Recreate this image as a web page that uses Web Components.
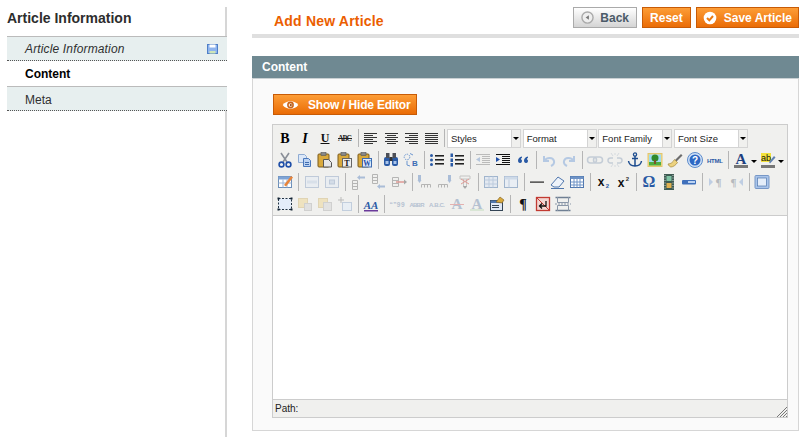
<!DOCTYPE html>
<html>
<head>
<meta charset="utf-8">
<title>Add New Article</title>
<style>
  html,body{margin:0;padding:0;background:#fff;}
  body{font-family:"Liberation Sans",Arial,sans-serif;font-size:12px;color:#2f2f2f;overflow:hidden;}
</style>
</head>
<body>
<admin-page>
  <admin-sidebar slot="side" heading="Article Information">
    <side-tab kind="changed" saved>Article Information</side-tab>
    <side-tab kind="active">Content</side-tab>
    <side-tab>Meta</side-tab>
  </admin-sidebar>
  <page-head heading="Add New Article">
    <admin-button kind="back" icon="back">Back</admin-button>
    <admin-button>Reset</admin-button>
    <admin-button icon="check">Save Article</admin-button>
  </page-head>
  <content-panel heading="Content">
    <admin-button icon="eye" wide>Show / Hide Editor</admin-button>
    <rich-editor></rich-editor>
  </content-panel>
</admin-page>

<script>
// icon set for the editor toolbar, all drawn on a 20x20 box
const serif = 'font-family="Liberation Serif,serif"';
const sans = 'font-family="Liberation Sans,sans-serif"';
const lines = (rows, c) => rows.map(r => `<rect x="${r[0]}" y="${r[1]}" width="${r[2]}" height="1" fill="${c || '#333'}"/>`).join('');
const clip = inner => `<rect x="3" y="4" width="11" height="13" rx="1" fill="#d9a93c" stroke="#7a5a1c"/><rect x="6" y="2.5" width="5" height="3" fill="#888" stroke="#555" stroke-width=".6"/>${inner}`;
const tableGrid = (fill, extra) => `<rect x="3.5" y="4.5" width="13" height="11" fill="${fill || '#dfe8f5'}" stroke="#6d8fb8"/>${extra || ''}`;
const listLines = `${lines([[8,5,9],[8,9,9],[8,13,9]],'#222')}${lines([[8,6,9],[8,10,9],[8,14,9]],'#777')}`;
const ICONS = {
  bold: `<text x="10" y="15" ${serif} font-size="14" font-weight="bold" text-anchor="middle" fill="#000">B</text>`,
  italic: `<text x="10" y="15" ${serif} font-size="14" font-weight="bold" font-style="italic" text-anchor="middle" fill="#000">I</text>`,
  underline: `<text x="10" y="13.5" ${serif} font-size="12" font-weight="bold" text-anchor="middle" fill="#111">U</text><rect x="5.5" y="15" width="9" height="1" fill="#111"/>`,
  strike: `<text x="10" y="13" ${serif} font-size="7.5" font-weight="bold" text-anchor="middle" fill="#222" textLength="14">ABC</text><rect x="3" y="10" width="14" height="1" fill="#222"/>`,
  left: lines([[3,5,13],[3,7,9],[3,9,13],[3,11,9],[3,13,13],[3,15,9]]),
  center: lines([[4,5,13],[6,7,9],[4,9,13],[6,11,9],[4,13,13],[6,15,9]]),
  right: lines([[4,5,13],[8,7,9],[4,9,13],[8,11,9],[4,13,13],[8,15,9]]),
  justify: lines([[4,5,13],[4,7,13],[4,9,13],[4,11,13],[4,13,13],[4,15,13]]),
  cut: `<path d="M6 3l6 9M14 3l-6 9" stroke="#8a8f98" stroke-width="1.6" fill="none"/><circle cx="6.5" cy="14.5" r="2.4" fill="none" stroke="#1f4fa8" stroke-width="1.6"/><circle cx="13.5" cy="14.5" r="2.4" fill="none" stroke="#1f4fa8" stroke-width="1.6"/>`,
  copy: `<path d="M3.5 4.5h6l2 2v6h-8z" fill="#dce8f8" stroke="#8fabd2"/><path d="M8.5 8.5h5l2 2v6h-7z" fill="#bcd3f2" stroke="#4a78bc"/>${lines([[10,12,4],[10,14,4]],'#3f6cb0')}`,
  paste: clip(`<path d="M8.5 9.5h5l3 3v4.500h-8z" fill="#e6e6e6" stroke="#555"/>`),
  pastetext: clip(`<rect x="7.500" y="8.500" width="9" height="8.500" fill="#eee" stroke="#666"/><text x="12" y="16" ${serif} font-size="8" font-weight="bold" text-anchor="middle" fill="#111">T</text>`),
  pasteword: clip(`<rect x="7.500" y="8.500" width="9" height="8.500" fill="#dfe8f8" stroke="#3f6cb0"/><text x="12" y="16" ${serif} font-size="7.500" font-weight="bold" text-anchor="middle" fill="#1f4fa8">W</text>`),
  find: `<rect x="3" y="7" width="6" height="9" rx="2" fill="#2a5aa5"/><rect x="11" y="7" width="6" height="9" rx="2" fill="#2a5aa5"/><rect x="5" y="3" width="3.500" height="5" fill="#4c4f57"/><rect x="11.500" y="3" width="3.500" height="5" fill="#4c4f57"/><rect x="8.500" y="7" width="3" height="4" fill="#333"/><rect x="4.500" y="11" width="3" height="3" fill="#a9c4ea"/><rect x="12.500" y="11" width="3" height="3" fill="#a9c4ea"/>`,
  replace: `<circle cx="6" cy="7" r="2.800" fill="none" stroke="#6c96cf" stroke-dasharray="1.500 1"/><path d="M9 3.500l3 1.500M6 11l0 4 3 1" fill="none" stroke="#6c96cf"/><text x="14" y="16" ${sans} font-size="8" font-weight="bold" text-anchor="middle" fill="#3c6cb4">B</text>`,
  bullist: `${listLines}<circle cx="4.500" cy="5.500" r="1.500" fill="#2a5aa5"/><circle cx="4.500" cy="10" r="1.500" fill="#2a5aa5"/><circle cx="4.500" cy="14.500" r="1.500" fill="#2a5aa5"/>`,
  numlist: `${listLines}<rect x="3.500" y="3.500" width="2.500" height="3.500" fill="#2a5aa5"/><rect x="3.500" y="8.500" width="2.500" height="3.500" fill="#2a5aa5"/><rect x="3.500" y="13" width="2.500" height="3.500" fill="#2a5aa5"/>`,
  outdent: `${lines([[3,4,14],[9,6,8],[9,8,8],[9,10,8],[9,12,8],[3,14,14]],'#999')}<path d="M7 7v5L3 9.500z" fill="#8fabd2"/>`,
  indent: `${lines([[3,4,14],[9,6,8],[9,8,8],[9,10,8],[9,12,8],[3,14,14]],'#111')}<path d="M3 7v5l4-2.500z" fill="#1f4fa8"/>`,
  quote: `<path d="M9 6.500C6.500 7 5 8.500 5 11a2 2 0 1 0 3-1.700c0-.8.5-1.300 1-1.500zM15 6.500c-2.500.5-4 2-4 4.500a2 2 0 1 0 3-1.700c0-.8.5-1.300 1-1.500z" fill="#2a5aa5"/>`,
  undo: `<path d="M5 6v5h5M5.500 10.500C8 7 14 7 15 11c.6 2.500-1 4-3 5" fill="none" stroke="#8fb0dc" stroke-width="2"/>`,
  redo: `<path d="M15 6v5h-5M14.500 10.500C12 7 6 7 5 11c-.6 2.500 1 4 3 5" fill="none" stroke="#8fb0dc" stroke-width="2"/>`,
  link: `<rect x="2.500" y="7" width="9" height="6" rx="3" fill="none" stroke="#a8b6c8" stroke-width="1.500"/><rect x="8.500" y="7" width="9" height="6" rx="3" fill="none" stroke="#a8b6c8" stroke-width="1.500"/>`,
  unlink: `<path d="M8 8H5.500a2.500 2.500 0 0 0 0 5H8M12 8h2.500a2.500 2.500 0 0 1 0 5H12" fill="none" stroke="#a8b6c8" stroke-width="1.500"/><path d="M6 3l2 3M14 3l-2 3M6 17l2-3M14 17l-2-3M10 3v2M10 15v2" stroke="#c3ccd6"/>`,
  anchor: `<circle cx="10" cy="4.500" r="1.600" fill="none" stroke="#1d4c8f" stroke-width="1.300"/><path d="M10 6v10M7 8.500h6M3.500 11c.5 3.500 3.500 5 6.500 5s6-1.500 6.500-5" fill="none" stroke="#1d4c8f" stroke-width="1.500"/>`,
  image: `<rect x="3" y="3.500" width="14" height="13" fill="#f4d884" stroke="#e2c66e"/><rect x="4" y="4.500" width="12" height="8" fill="#9fdcef"/><rect x="4" y="12" width="12" height="3.500" fill="#4cae3f"/><circle cx="10" cy="8" r="3.500" fill="#2f8a2b"/><rect x="9" y="10" width="2" height="4" fill="#7a5528"/>`,
  cleanup: `<path d="M10 10l6-6 1.500 1.500-6 6z" fill="#6d6d6d"/><path d="M3 14c3 0 5-2 6.500-4.500l3 3C11 15 8 17 6 17c-1 0-2.500-1.500-3-3z" fill="#ecd27f" stroke="#a3873a" stroke-width=".7"/>`,
  help: `<circle cx="10" cy="10" r="7.500" fill="#cfe0f6" stroke="#5d8ccc"/><circle cx="10" cy="10" r="5.500" fill="#2d68c4"/><text x="10" y="13.500" ${sans} font-size="10" font-weight="bold" text-anchor="middle" fill="#fff">?</text>`,
  html: `<text x="10" y="12.500" ${sans} font-size="6" font-weight="bold" text-anchor="middle" fill="#2a5aa5" textLength="16">HTML</text>`,
  forecolor: `<text x="10" y="14" ${serif} font-size="15" font-weight="bold" text-anchor="middle" fill="#1d3f80">A</text><rect x="3" y="15" width="14" height="3" fill="#777"/>`,
  backcolor: `<rect x="3" y="3" width="10" height="9" fill="#f3e23a"/><text x="8" y="10.500" ${sans} font-size="9" text-anchor="middle" fill="#111">ab</text><path d="M11 12l5-6 1.500 1.500-5.500 6z" fill="#5f7fb0"/><rect x="3" y="15" width="14" height="3" fill="#777"/>`,
  tableprops: `${tableGrid('#fff', '<rect x="3.500" y="4.500" width="13" height="3" fill="#7fa4d6"/><path d="M3.500 11h13M8 7.500v8M12 7.500v8" stroke="#9bb3d3"/>')}<path d="M9 13l7-9 2 1.500-7 9z" fill="#e8843a"/>`,
  rowprops: `<rect x="3.500" y="4.500" width="13" height="11" fill="#e6ecf4" stroke="#9fb2cc"/><rect x="5" y="8.500" width="10" height="3" fill="#c9d6e6"/>`,
  cellprops: `<rect x="3.500" y="4.500" width="13" height="11" fill="#e6ecf4" stroke="#9fb2cc"/><rect x="7.500" y="8" width="5" height="4" fill="#c0d0e4" stroke="#9fb2cc"/>`,
  rowbefore: `<path d="M3.500 8.500h5v9h-5zM3.500 11.500h5M3.500 14.500h5" fill="none" stroke="#8f8f8f"/><path d="M10 5.500h6" stroke="#7d9cc9" stroke-width="2"/><path d="M11 3v5L8 5.500z" fill="#7d9cc9"/>`,
  rowafter: `<path d="M3.500 2.500h5v9h-5zM3.500 5.500h5M3.500 8.500h5" fill="none" stroke="#8f8f8f"/><path d="M10 14.500h6" stroke="#7d9cc9" stroke-width="2"/><path d="M11 12v5l-3-2.500z" fill="#7d9cc9"/>`,
  rowdelete: `<path d="M3.500 5.500h6v9h-6zM3.500 8.500h6M3.500 11.500h6" fill="none" stroke="#8f8f8f"/><path d="M7 10h8" stroke="#d4625a" stroke-width="1.500"/><path d="M15 7.500v5l3-2.500z" fill="#777"/>`,
  colbefore: `<path d="M6.500 15.500v-3h9v3M9.500 12.500v3M12.500 12.500v3" fill="none" stroke="#8f8f8f"/><rect x="3" y="3" width="3" height="5" fill="#7d9cc9"/><path d="M2.500 8h4L4.500 11z" fill="#7d9cc9"/>`,
  colafter: `<path d="M3.500 15.500v-3h9v3M6.500 12.500v3M9.500 12.500v3" fill="none" stroke="#8f8f8f"/><rect x="13" y="3" width="3" height="5" fill="#7d9cc9"/><path d="M12.500 8h4l-2 3z" fill="#7d9cc9"/>`,
  coldelete: `<path d="M5 4h10v3h-10zM8.500 7v8h3v-8" fill="none" stroke="#a9a9a9"/><path d="M6 7l8 5M14 7l-8 5" stroke="#d4625a"/><path d="M8 14h4l-2 3z" fill="#777"/>`,
  splitcells: tableGrid('#dbe6f4', '<path d="M3.500 8h13M3.500 12h13M8 4.500v11M12 4.500v11" stroke="#9bb3d3"/>'),
  mergecells: tableGrid('#e6eef8', '<rect x="3.500" y="4.500" width="13" height="3" fill="#b9cce5"/><path d="M8 7.500v8" stroke="#9bb3d3"/>'),
  hr: `<rect x="3" y="9.500" width="14" height="1.200" fill="#222"/>`,
  removeformat: `<path d="M4 13l7-8 6 4-5 6H7z" fill="#eef3fa" stroke="#4f76ad"/><path d="M4 16.500h13" stroke="#4f76ad"/>`,
  table: `<rect x="3.500" y="4.500" width="13" height="11" fill="#fff" stroke="#4f76ad"/><rect x="3.500" y="4.500" width="13" height="2.500" fill="#6f93c6"/><path d="M3.500 10h13M3.500 13h13M7 7v8.500M10 7v8.500M13 7v8.500" stroke="#6f93c6"/>`,
  sub: `<text x="8" y="14" ${sans} font-size="12" font-weight="bold" text-anchor="middle" fill="#111">x</text><text x="14.500" y="16" ${sans} font-size="6" font-weight="bold" text-anchor="middle" fill="#2a5aa5">2</text>`,
  sup: `<text x="8" y="15" ${sans} font-size="12" font-weight="bold" text-anchor="middle" fill="#111">x</text><text x="14.500" y="9" ${sans} font-size="6" font-weight="bold" text-anchor="middle" fill="#333">2</text>`,
  charmap: `<text x="10" y="15" ${serif} font-size="16" font-weight="bold" text-anchor="middle" fill="#2a5aa5">Ω</text>`,
  media: `<rect x="5" y="2" width="10" height="16" fill="#3e5a52"/><rect x="7.500" y="4" width="5" height="5" fill="#7fc3a4"/><rect x="7.500" y="11" width="5" height="5" fill="#e0b050"/><path d="M6 3v14M14 3v14" stroke="#cfd7d2" stroke-dasharray="1 1.500"/>`,
  advhr: `<rect x="3" y="8" width="14" height="4.500" rx="1" fill="#3f70bb"/><rect x="9" y="9" width="7" height="2" fill="#bcd3f2"/>`,
  ltr: `<path d="M3 6v8l4-4z" fill="#9fb8dc"/><text x="12.500" y="14" ${serif} font-size="11" font-weight="bold" text-anchor="middle" fill="#8f969e">¶</text>`,
  rtl: `<text x="7.500" y="14" ${serif} font-size="11" font-weight="bold" text-anchor="middle" fill="#8f969e">¶</text><path d="M17 6v8l-4-4z" fill="#9fb8dc"/>`,
  fullscreen: `<rect x="3" y="3.500" width="14" height="13" rx="1" fill="#a9c4ea" stroke="#7797c6"/><rect x="5.500" y="6" width="9" height="8" fill="#e4edf9" stroke="#4f76ad" stroke-width=".7"/>`,
  layer: `<rect x="3.500" y="4.500" width="13" height="11" fill="#e4edf9" stroke="#234" stroke-dasharray="2 1.500"/><rect x="2.500" y="3.500" width="2" height="2" fill="#123"/><rect x="15.500" y="3.500" width="2" height="2" fill="#123"/><rect x="2.500" y="14.500" width="2" height="2" fill="#123"/><rect x="15.500" y="14.500" width="2" height="2" fill="#123"/>`,
  forward: `<rect x="3.500" y="4.500" width="9" height="9" fill="#eed9a0" stroke="#d6c38e"/><rect x="9.500" y="9.500" width="7" height="7" fill="#d7d7d7" stroke="#bbb"/>`,
  backward: `<rect x="3.500" y="4.500" width="9" height="9" fill="#eed9a0" stroke="#d6c38e"/><rect x="8.500" y="8.500" width="8" height="8" fill="#dadada" stroke="#bbb"/>`,
  absolute: `<rect x="7.500" y="8.500" width="9" height="8" fill="#e4edf9" stroke="#a5b8d2"/><path d="M6 3v6M3 6h6" stroke="#999"/>`,
  styleprops: `<text x="10" y="15" ${serif} font-size="11" font-weight="bold" font-style="italic" text-anchor="middle" fill="#2a5aa5">AA</text><rect x="3" y="16" width="14" height="1.500" fill="#6a3a9a"/>`,
  cite: `<text x="10" y="12.500" ${sans} font-size="6.500" font-weight="bold" text-anchor="middle" fill="#8fa3bf" textLength="15">“”99</text>`,
  abbr: `<text x="10" y="12.500" ${sans} font-size="6" font-weight="bold" text-anchor="middle" fill="#8fa3bf" textLength="15">ABBR</text>`,
  acronym: `<text x="10" y="12.500" ${sans} font-size="6" font-weight="bold" text-anchor="middle" fill="#8fa3bf" textLength="16">A.B.C.</text>`,
  del: `<text x="10" y="15" ${serif} font-size="15" font-weight="bold" text-anchor="middle" fill="#8fa3bf">A</text><rect x="3" y="10" width="14" height="1" fill="#d88"/>`,
  ins: `<text x="10" y="15" ${serif} font-size="15" font-weight="bold" text-anchor="middle" fill="#8fa3bf">A</text><rect x="3" y="15.500" width="14" height="1" fill="#a4cf9d"/>`,
  attribs: `<rect x="3.500" y="6.500" width="12" height="10" fill="#dfe8f5" stroke="#345"/><rect x="3.500" y="6.500" width="12" height="2.500" fill="#4f76ad"/><path d="M9 8l4-5 4 3-2 3z" fill="#d9a93c" stroke="#7a5a1c" stroke-width=".6"/>${lines([[5,11,7],[5,13,7]],'#345')}`,
  visualchars: `<text x="10" y="15" ${serif} font-size="14" font-weight="bold" text-anchor="middle" fill="#111">¶</text>`,
  nonbreaking: `<rect x="3.500" y="3.500" width="13" height="13" fill="#f3d6d2" stroke="#c23a32" stroke-width="1.300"/><path d="M4 4l12 12" stroke="#c23a32"/><path d="M13 7v5H7M9 9.500L6.500 12 9 14.500" fill="none" stroke="#111" stroke-width="1.300"/>`,
  pagebreak: `<path d="M2.500 3.500h15M2.500 16.500h15" stroke="#6f7f93" stroke-width="1.500"/><path d="M4.500 3v5.500h11V3M4.500 17v-5.500h11V17" fill="none" stroke="#8a97a8"/><path d="M2 10h16" stroke="#8a97a8" stroke-dasharray="2 1"/>`
};
const BUTTON_ICONS = {
  back: `<svg width="13" height="13" viewBox="0 0 14 14"><circle cx="7" cy="7" r="6" fill="#eee" stroke="#aaa" stroke-width="1.500"/><path d="M8.500 4.500v5L5 7z" fill="#777"/></svg>`,
  check: `<svg width="14" height="14" viewBox="0 0 14 14"><circle cx="7" cy="7" r="6.300" fill="#fff"/><path d="M4 7l2.300 2.300L10 5" fill="none" stroke="#ea7a12" stroke-width="2"/></svg>`,
  eye: `<svg width="17" height="10" viewBox="0 0 24 14"><path d="M1 7C6 0 18 0 23 7 18 14 6 14 1 7z" fill="#fff"/><circle cx="12" cy="7" r="4.800" fill="#c8641c"/><circle cx="12" cy="7" r="2.600" fill="#fbe3c8"/><circle cx="12.500" cy="7" r="1.300" fill="#8a3c08"/></svg>`
};

class AdminPage extends HTMLElement{
  constructor(){
    super();
    this.attachShadow({mode:"open"});
    this.shadowRoot.innerHTML = `
      <style>
        :host{display:flex;height:437px;overflow:hidden;}
        main{margin-left:25px;width:547px;}
      </style>
      <slot name="side"></slot>
      <main><slot></slot></main>`;
  }
}
class AdminSidebar extends HTMLElement{
  constructor(){
    super();
    this.attachShadow({mode:"open"});
  }
  connectedCallback(){
    this.shadowRoot.innerHTML = `
      <style>
        :host{display:block;box-sizing:border-box;width:220px;margin:7px 0 0 7px;border-right:2px solid #d6d6d6;}
        h3{margin:0;height:29px;padding-top:3px;box-sizing:border-box;font-size:14px;line-height:16px;font-weight:bold;color:#2d2d2d;}
      </style>
      <h3>${this.getAttribute("heading")}</h3>
      <slot></slot>`;
  }
}
class SideTab extends HTMLElement{
  constructor(){
    super();
    this.attachShadow({mode:"open"});
  }
  connectedCallback(){
    const saved = this.hasAttribute("saved") ? `<svg width="11" height="10" viewBox="0 0 11 10"><rect x=".5" y=".5" width="10" height="9" fill="#8fb4ee" stroke="#4f7fc7"/><rect x="2.500" y=".5" width="6" height="3" fill="#fff"/><rect x="2.500" y="7" width="6" height="2.500" fill="#cfe6b8"/></svg>` : "";
    this.shadowRoot.innerHTML = `
      <style>
        :host{display:flex;align-items:center;justify-content:space-between;box-sizing:border-box;height:25px;margin-right:-2px;padding:0 9px 0 18px;font-size:12px;color:#2f2f2f;background:#e7efef;border-top:1px solid #bbb;border-bottom:1px dotted #555;}
        :host([kind="changed"]){font-style:italic;letter-spacing:.15px;}
        :host([kind="active"]){font-weight:bold;color:#000;background:#fff;border-top:0;border-bottom:0;}
        :host(:last-child){padding-top:2px;}
        svg{display:block;}
      </style>
      <slot></slot>${saved}`;
  }
}
class PageHead extends HTMLElement{
  constructor(){
    super();
    this.attachShadow({mode:"open"});
  }
  connectedCallback(){
    this.shadowRoot.innerHTML = `
      <style>
        :host{display:flex;justify-content:space-between;align-items:flex-start;box-sizing:border-box;height:38px;padding:7px 0 0 22px;border-bottom:4px solid #dfdfdf;margin-bottom:18px;}
        h3{margin:0;padding-top:5px;font-size:14px;line-height:18px;font-weight:bold;color:#eb5e00;letter-spacing:.2px;}
        .acts{display:flex;gap:5px;}
      </style>
      <h3>${this.getAttribute("heading")}</h3>
      <div class="acts"><slot></slot></div>`;
  }
}
class AdminButton extends HTMLElement{
  constructor(){
    super();
    this.attachShadow({mode:"open"});
  }
  connectedCallback(){
    const icon = BUTTON_ICONS[this.getAttribute("icon")] || "";
    this.shadowRoot.innerHTML = `
      <style>
        :host{display:inline-flex;align-items:center;box-sizing:border-box;height:21px;padding:0 7px;font-size:12px;font-weight:bold;color:#fff;white-space:nowrap;background:linear-gradient(#fd9d36,#ea6c06);border:1px solid #c85b06;}
        :host([icon="check"]){padding:0 6px;gap:7px;}
        :host([kind="back"]){color:#4b5a68;background:linear-gradient(#fff,#d4d4d4);border-color:#aaa;gap:6px;padding:0 7px;}
        :host([wide]){padding:0 6px 0 8px;gap:9px;letter-spacing:-.2px;}
        svg{display:block;}
      </style>
      ${icon}<slot></slot>`;
  }
}
class ContentPanel extends HTMLElement{
  constructor(){
    super();
    this.attachShadow({mode:"open"});
  }
  connectedCallback(){
    this.shadowRoot.innerHTML = `
      <style>
        :host{display:block;}
        h4{margin:0;height:22px;padding-left:10px;font-size:12px;line-height:22px;font-weight:bold;color:#fff;background:#6f8992;}
        .body{box-sizing:border-box;height:353px;padding:15px 11px 0 19px;background:#fafafa;border:1px solid #d6d6d6;border-top-color:#c9d0d3;}
        ::slotted(admin-button){margin-left:1px;}
      </style>
      <h4>${this.getAttribute("heading")}</h4>
      <div class="body"><slot></slot></div>`;
  }
}
class ToolIcon extends HTMLElement{
  constructor(){
    super();
    this.attachShadow({mode:"open"});
  }
  connectedCallback(){
    const off = this.hasAttribute("off") ? ' opacity=".6"' : "";
    this.shadowRoot.innerHTML = `
      <style>
        :host{display:block;width:20px;height:20px;flex:none;}
        svg{display:block;}
      </style>
      <svg width="20" height="20" viewBox="0 0 20 20"${off}>${ICONS[this.getAttribute("name")]}</svg>`;
  }
}
class ToolSelect extends HTMLElement{
  constructor(){
    super();
    this.attachShadow({mode:"open"});
    this.shadowRoot.innerHTML = `
      <style>
        :host{display:flex;box-sizing:border-box;width:74px;height:19px;margin-right:1.67px;font-size:9.5px;color:#222;border:1px solid #d4d4d4;background:#fff;}
        .t{flex:1;padding-left:3px;line-height:17px;overflow:hidden;white-space:nowrap;}
        .a{width:8px;border-left:1px solid #d4d4d4;background:#f0f0ee;position:relative;}
        .a::after{content:"";position:absolute;left:1px;top:7px;border:3px solid transparent;border-top:3px solid #000;border-bottom:0;}
      </style>
      <div class="t"><slot></slot></div><div class="a"></div>`;
  }
}
// toolbar rows: "|" is a separator, "||" a wider one, "!" a greyed icon, "v" a small drop arrow
const ROWS = [
  "bold italic underline strike | left center right justify | @Styles @Format @Font_Family @Font_Size",
  "cut copy paste pastetext pasteword | find replace | bullist numlist | !outdent indent quote | !undo !redo | !link !unlink anchor image cleanup help html | forecolor v backcolor v",
  "tableprops || !rowprops !cellprops || !rowbefore !rowafter !rowdelete | !colbefore !colafter !coldelete | !splitcells !mergecells | hr removeformat table | sub sup | charmap media advhr || !ltr !rtl | fullscreen",
  "layer !forward !backward !absolute | styleprops | !cite !abbr !acronym !del !ins attribs | visualchars nonbreaking pagebreak"
];
class EditorToolbar extends HTMLElement{
  constructor(){
    super();
    this.attachShadow({mode:"open"});
    const rows = ROWS.map(r => `<div class="row">${r.split(" ").map(item => {
      if(item === "|") return `<i class="sep"></i>`;
      if(item === "||") return `<i class="sep wide"></i>`;
      if(item === "v") return `<i class="drop"></i>`;
      if(item[0] === "@") return `<tool-select>${item.slice(1).replace("_"," ")}</tool-select>`;
      if(item[0] === "!") return `<tool-icon name="${item.slice(1)}" off></tool-icon>`;
      return `<tool-icon name="${item}"></tool-icon>`;
    }).join("")}</div>`).join("");
    this.shadowRoot.innerHTML = `
      <style>
        :host{display:block;box-sizing:border-box;height:91px;padding:2px 0 0 2px;background:#f0f0ee;border-bottom:1px solid #ccc;}
        .row{display:flex;align-items:center;height:22px;}
        .sep{display:block;width:1px;height:18px;margin:0 2px 0 3px;background:#b5b5b5;flex:none;}
        .sep.wide{margin-right:3px;}
        .drop{display:block;width:0;height:0;flex:none;margin:2px 1px 0 0;border:3px solid transparent;border-top:3px solid #000;border-bottom:0;}
      </style>
      ${rows}`;
  }
}
class RichEditor extends HTMLElement{
  constructor(){
    super();
    this.attachShadow({mode:"open"});
    this.shadowRoot.innerHTML = `
      <style>
        :host{display:block;box-sizing:border-box;width:516px;height:294px;margin-top:9px;border:1px solid #ccc;}
        .area{height:183px;background:#fff;}
        .status{position:relative;box-sizing:border-box;height:18px;padding:2px 0 0 2px;font-size:10px;line-height:13px;color:#222;background:#f0f0ee;border-top:1px solid #ccc;}
        svg{position:absolute;right:0;bottom:0;display:block;}
      </style>
      <editor-toolbar></editor-toolbar>
      <div class="area"></div>
      <div class="status">Path:<svg width="10" height="10" viewBox="0 0 10 10"><path d="M0 10L10 0M3 10l7-7M6 10l4-4M9 10l1-1" stroke="#777"/></svg></div>`;
  }
}
customElements.define("admin-page", AdminPage);
customElements.define("admin-sidebar", AdminSidebar);
customElements.define("side-tab", SideTab);
customElements.define("page-head", PageHead);
customElements.define("admin-button", AdminButton);
customElements.define("content-panel", ContentPanel);
customElements.define("tool-icon", ToolIcon);
customElements.define("tool-select", ToolSelect);
customElements.define("editor-toolbar", EditorToolbar);
customElements.define("rich-editor", RichEditor);
</script>
</body>
</html>
